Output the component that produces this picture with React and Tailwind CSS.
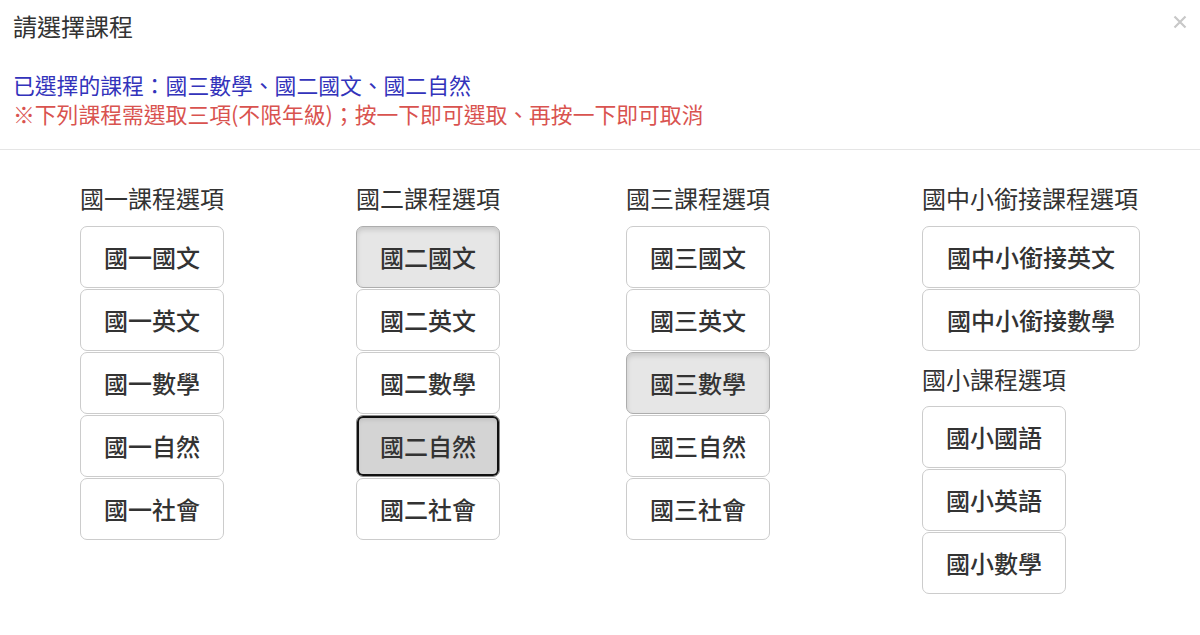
import React, { useState } from "react";

const groups = [
  { title: "國一課程選項", items: ["國一國文", "國一英文", "國一數學", "國一自然", "國一社會"], width: "w-[276px]" },
  { title: "國二課程選項", items: ["國二國文", "國二英文", "國二數學", "國二自然", "國二社會"], width: "w-[270px]" },
  { title: "國三課程選項", items: ["國三國文", "國三英文", "國三數學", "國三自然", "國三社會"], width: "w-[296px]" },
];

const CourseButton = ({ label, selected, focused, wide, onClick }) => {
  let look = "bg-white border-[#cccccc]";
  if (selected) look = "bg-[#e6e6e6] border-[#adadad] shadow-[inset_0_3px_5px_rgba(0,0,0,0.125)]";
  if (focused) look = "bg-[#d4d4d4] border-[#8c8c8c] shadow-[inset_0_0_0_2px_#111,inset_0_3px_5px_rgba(0,0,0,0.125)]";
  return (
    <button
      onClick={onClick}
      className={`${wide ? "w-[218px]" : "w-[144px]"} h-[62px] shrink-0 rounded-[7px] border text-[24px] leading-none font-medium text-[#333] whitespace-nowrap outline-none ${look}`}
    >
      {label}
    </button>
  );
};

const ButtonStack = ({ items, selected, focus, wide, onToggle }) => (
  <div className="flex flex-col gap-[1px]">
    {items.map((name) => (
      <CourseButton
        key={name}
        label={name}
        wide={wide}
        selected={selected.includes(name)}
        focused={focus === name}
        onClick={() => onToggle(name)}
      />
    ))}
  </div>
);

export default function App() {
  const [selected, setSelected] = useState(["國三數學", "國二國文", "國二自然"]);
  const [focus, setFocus] = useState("國二自然");

  const toggle = (name) => {
    setFocus(name);
    setSelected((prev) =>
      prev.includes(name) ? prev.filter((n) => n !== name) : prev.length >= 3 ? prev : [...prev, name]
    );
  };

  return (
    <div
      className="w-full h-[635px] bg-white text-[#333] overflow-hidden"
      style={{ fontFamily: '"Noto Sans CJK TC", "Noto Sans", sans-serif' }}
    >
      <div className="relative px-[13px] pt-[11px] pb-[21px] border-b border-[#e5e5e5]">
        <h4 className="text-[24px] leading-[30px] font-normal">請選擇課程</h4>
        <button className="absolute right-[12px] top-[14px] text-[#c8c8c8]">
          <svg width="16" height="16" viewBox="0 0 16 16" fill="none" stroke="currentColor" strokeWidth="2.2">
            <path d="M2.5 2.5 L13.5 13.5 M13.5 2.5 L2.5 13.5" />
          </svg>
        </button>
        <div className="mt-[29px] text-[21.8px] leading-[29px] font-normal">
          <p className="text-[#3333bb]">已選擇的課程：{selected.join("、")}</p>
          <p className="text-[#d9534f]">※下列課程需選取三項(不限年級)；按一下即可選取、再按一下即可取消</p>
        </div>
      </div>

      <div className="flex pl-[80px] pt-[33px]">
        {groups.map((g) => (
          <div key={g.title} className={`${g.width} shrink-0`}>
            <h4 className="text-[24px] leading-[30px] font-normal mb-[13px]">{g.title}</h4>
            <ButtonStack items={g.items} selected={selected} focus={focus} onToggle={toggle} />
          </div>
        ))}
        <div className="shrink-0">
          <h4 className="text-[24px] leading-[30px] font-normal mb-[13px]">國中小銜接課程選項</h4>
          <ButtonStack items={["國中小銜接英文", "國中小銜接數學"]} wide selected={selected} focus={focus} onToggle={toggle} />
          <h4 className="text-[24px] leading-[30px] font-normal mt-[13px] mb-[12px]">國小課程選項</h4>
          <ButtonStack items={["國小國語", "國小英語", "國小數學"]} selected={selected} focus={focus} onToggle={toggle} />
        </div>
      </div>
    </div>
  );
}
